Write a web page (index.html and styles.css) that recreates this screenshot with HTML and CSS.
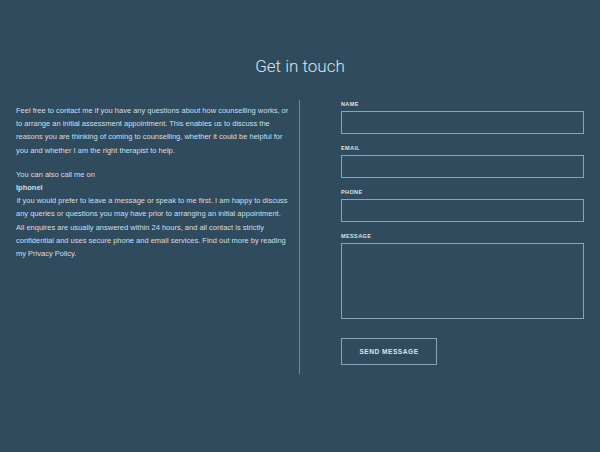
FILE: index.html
```html
<!DOCTYPE html>
<html>
<head>
<meta charset="utf-8">
<link rel="stylesheet" href="styles.css">
</head>
<body>
<div class="page">
  <h1 class="title">Get in touch</h1>
  <div class="columns">
    <div class="info">
      <p class="para">Feel free to contact me if you have any questions about how counselling works, or to arrange an initial assessment appointment. This enables us to discuss the reasons you are thinking of coming to counselling, whether it could be helpful for you and whether I am the right therapist to help.</p>
      <p class="para">You can also call me on<br><strong>Iphonel</strong><br>&#8202;if you would prefer to leave a message or speak to me first. I am happy to discuss any queries or questions you may have prior to arranging an initial appointment. All enquires are usually answered within 24 hours, and all contact is strictly confidential and uses secure phone and email services. Find out more by reading my Privacy Policy.</p>
    </div>
    <form class="form">
      <label class="field"><span class="label">NAME</span><input class="input" type="text"></label>
      <label class="field"><span class="label">EMAIL</span><input class="input" type="text"></label>
      <label class="field"><span class="label">PHONE</span><input class="input" type="text"></label>
      <label class="field"><span class="label">MESSAGE</span><textarea class="input area"></textarea></label>
      <button class="send" type="button">SEND MESSAGE</button>
    </form>
  </div>
</div>
</body>
</html>
```

FILE: styles.css
```css
html, body {
  margin: 0;
  padding: 0;
  background: #304b5d;
  height: 100%;
}
.page {
  font-family: "Liberation Sans", Arial, sans-serif;
  color: #d3dfe6;
  padding-top: 53px;
}
.title {
  margin: 0;
  text-align: center;
  font-family: Roboto, "Liberation Sans", sans-serif;
  font-weight: 300;
  font-size: 17px;
  line-height: 26px;
  color: #dce6ec;
}
.columns {
  display: flex;
  margin-top: 21px;
  padding: 0 16px;
}
.info {
  width: 284px;
  box-sizing: border-box;
  border-right: 1px solid #6f889a;
  padding-top: 4px;
  padding-right: 10px;
}
.para {
  margin: 0 0 11px;
  font-size: 7.5px;
  line-height: 13.2px;
}
.para strong {
  font-weight: bold;
}
.form {
  flex: 1;
  padding-left: 41px;
  padding-bottom: 9px;
  display: flex;
  flex-direction: column;
}
.field {
  display: flex;
  flex-direction: column;
  margin-bottom: 10px;
}
.label {
  font-size: 5.5px;
  font-weight: bold;
  letter-spacing: 0.4px;
  line-height: 8px;
  margin-bottom: 3px;
  color: #dbe5eb;
}
.input {
  box-sizing: border-box;
  height: 23px;
  border: 1px solid #8aa4b4;
  background: transparent;
  margin: 0;
  padding: 0;
  outline: none;
  resize: none;
}
.area {
  height: 76px;
}
.send {
  align-self: flex-start;
  margin-top: 9px;
  width: 96px;
  height: 27px;
  box-sizing: border-box;
  border: 1px solid #8aa4b4;
  background: transparent;
  color: #dbe5eb;
  font-family: "Liberation Sans", Arial, sans-serif;
  font-weight: bold;
  font-size: 6.6px;
  letter-spacing: 0.5px;
  padding: 0;
}
```
